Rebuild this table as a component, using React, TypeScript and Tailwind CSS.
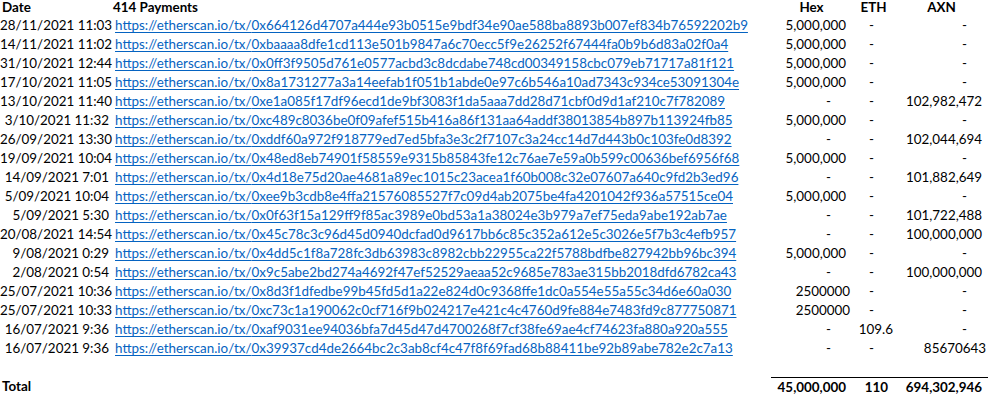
import React from "react";

type Cell = { v: string; t: "acc" | "gen" | "dash" };
const A = (v: string): Cell => ({ v, t: "acc" });
const G = (v: string): Cell => ({ v, t: "gen" });
const D: Cell = { v: "-", t: "dash" };

const rows: [string, string, Cell, Cell, Cell][] = [
  ["28/11/2021 11:03", "0x664126d4707a444e93b0515e9bdf34e90ae588ba8893b007ef834b76592202b9", A("5,000,000"), D, D],
  ["14/11/2021 11:02", "0xbaaaa8dfe1cd113e501b9847a6c70ecc5f9e26252f67444fa0b9b6d83a02f0a4", A("5,000,000"), D, D],
  ["31/10/2021 12:44", "0x0ff3f9505d761e0577acbd3c8dcdabe748cd00349158cbc079eb71717a81f121", A("5,000,000"), D, D],
  ["17/10/2021 11:05", "0x8a1731277a3a14eefab1f051b1abde0e97c6b546a10ad7343c934ce53091304e", A("5,000,000"), D, D],
  ["13/10/2021 11:40", "0xe1a085f17df96ecd1de9bf3083f1da5aaa7dd28d71cbf0d9d1af210c7f782089", D, D, A("102,982,472")],
  ["3/10/2021 11:32", "0xc489c8036be0f09afef515b416a86f131aa64addf38013854b897b113924fb85", A("5,000,000"), D, D],
  ["26/09/2021 13:30", "0xddf60a972f918779ed7ed5bfa3e3c2f7107c3a24cc14d7d443b0c103fe0d8392", D, D, A("102,044,694")],
  ["19/09/2021 10:04", "0x48ed8eb74901f58559e9315b85843fe12c76ae7e59a0b599c00636bef6956f68", A("5,000,000"), D, D],
  ["14/09/2021 7:01", "0x4d18e75d20ae4681a89ec1015c23acea1f60b008c32e07607a640c9fd2b3ed96", D, D, A("101,882,649")],
  ["5/09/2021 10:04", "0xee9b3cdb8e4ffa21576085527f7c09d4ab2075be4fa4201042f936a57515ce04", A("5,000,000"), D, D],
  ["5/09/2021 5:30", "0x0f63f15a129ff9f85ac3989e0bd53a1a38024e3b979a7ef75eda9abe192ab7ae", D, D, A("101,722,488")],
  ["20/08/2021 14:54", "0x45c78c3c96d45d0940dcfad0d9617bb6c85c352a612e5c3026e5f7b3c4efb957", D, D, A("100,000,000")],
  ["9/08/2021 0:29", "0x4dd5c1f8a728fc3db63983c8982cbb22955ca22f5788bdfbe827942bb96bc394", A("5,000,000"), D, D],
  ["2/08/2021 0:54", "0x9c5abe2bd274a4692f47ef52529aeaa52c9685e783ae315bb2018dfd6782ca43", D, D, A("100,000,000")],
  ["25/07/2021 10:36", "0x8d3f1dfedbe99b45fd5d1a22e824d0c9368ffe1dc0a554e55a55c34d6e60a030", G("2500000"), D, D],
  ["25/07/2021 10:33", "0xc73c1a190062c0cf716f9b024217e421c4c4760d9fe884e7483fd9c877750871", G("2500000"), D, D],
  ["16/07/2021 9:36", "0xaf9031ee94036bfa7d45d47d4700268f7cf38fe69ae4cf74623fa880a920a555", D, G("109.6"), D],
  ["16/07/2021 9:36", "0x39937cd4de2664bc2c3ab8cf4c47f8f69fad68b88411be92b89abe782e2c7a13", D, D, G("85670643")],
];

function NumCell({ c }: { c: Cell }) {
  if (c.t === "dash") return <div className="text-right pr-[21px]">-</div>;
  if (c.t === "gen") return <div className="text-right pr-[2px]">{c.v}</div>;
  return <div className="text-right pr-[6px]">{c.v}</div>;
}

const cols = "grid grid-cols-[112px_659px_81px_43px_93px]";

export default function App() {
  return (
    <div
      className="w-[988px] h-[400px] bg-white text-black overflow-hidden text-[13.4px]"
      style={{ fontFamily: "Lato, 'Open Sans', sans-serif" }}
    >
      <div className={`${cols} h-[16px] leading-[15px] font-bold`}>
        <div className="pl-[2px]">Date</div>
        <div className="pl-[1px]">414 Payments</div>
        <div className="text-center">Hex</div>
        <div className="text-center">ETH</div>
        <div className="text-center">AXN</div>
      </div>
      {rows.map((r, i) => (
        <div key={i} className={`${cols} h-[19px] leading-[19px] whitespace-nowrap`}>
          <div className="text-right pr-[3px]">{r[0]}</div>
          <div className="pl-[3px]">
            <a className="text-[#0563C1] underline underline-offset-[2px]" href="#">
              https://etherscan.io/tx/{r[1]}
            </a>
          </div>
          <NumCell c={r[2]} />
          <NumCell c={r[3]} />
          <NumCell c={r[4]} />
        </div>
      ))}
      <div className="h-[19px]" />
      <div className={`${cols} h-[19px] leading-[19px] font-bold`}>
        <div className="pl-[2px]">Total</div>
        <div />
        <div className="border-t border-black text-right pr-[6px]">45,000,000</div>
        <div className="border-t border-black text-right pr-[7px]">110</div>
        <div className="border-t border-black text-right pr-[6px]">694,302,946</div>
      </div>
    </div>
  );
}
